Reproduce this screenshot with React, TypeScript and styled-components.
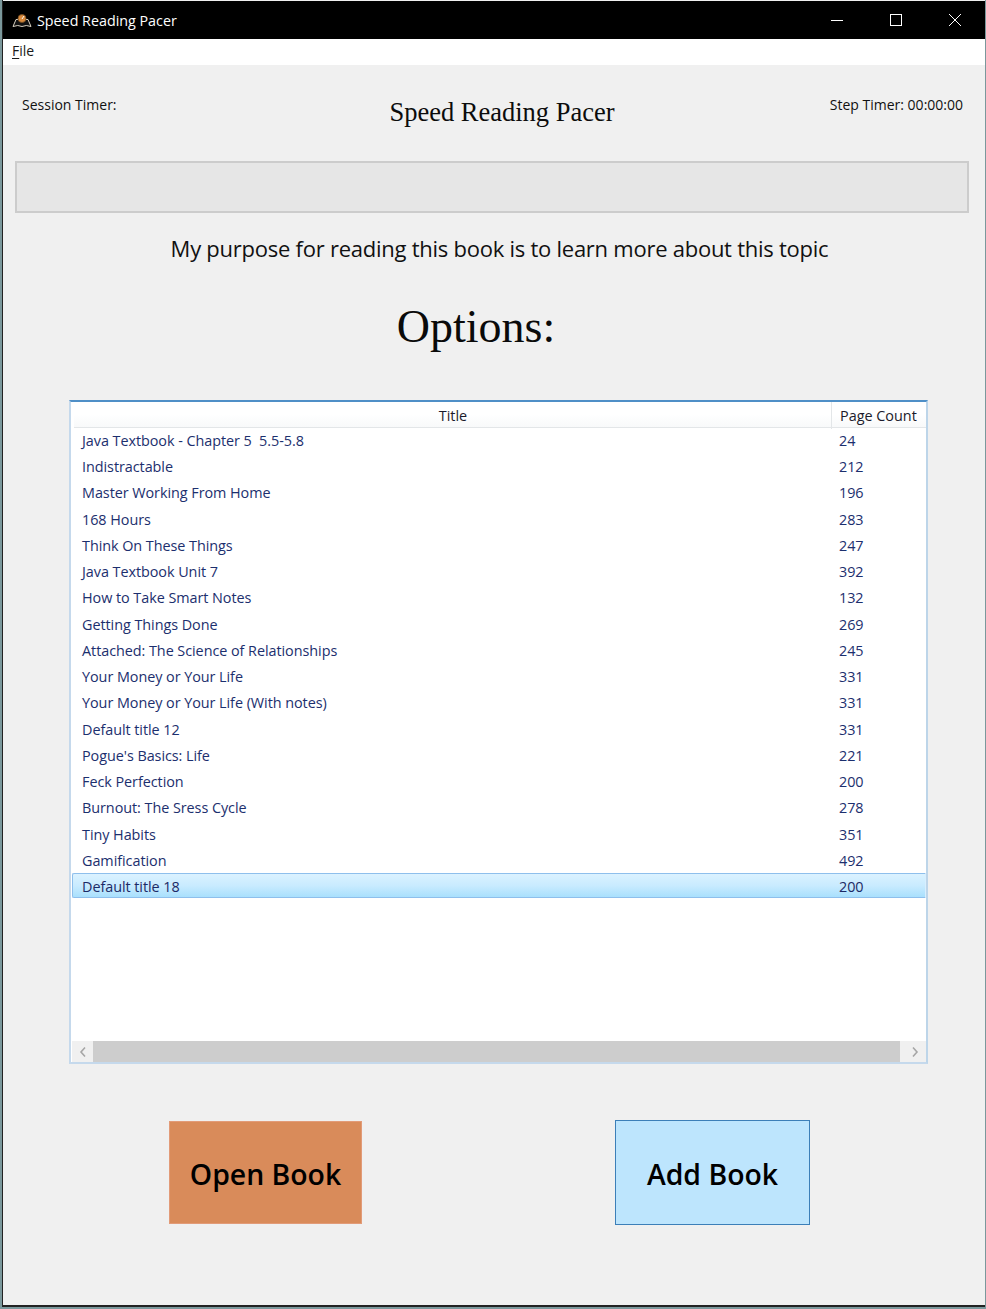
import React from "react";
import styled, { createGlobalStyle } from "styled-components";

const Global = createGlobalStyle`
  html, body { margin: 0; padding: 0; background: #7b989c; }
  body { width: 986px; height: 1309px; overflow: hidden; font-family: "Open Sans", "Noto Sans", sans-serif; }
`;

const Win = styled.div`
  box-sizing: border-box;
  width: 983px;
  height: 1307px;
  margin-left: 2px;
  padding-top: 1px;
  display: flex;
  flex-direction: column;
  background: #f0f0f0;
  border-left: 1px solid #222;
  border-bottom: 2px solid #222;
`;

const TitleBar = styled.div`
  height: 38px;
  flex: none;
  background: #000;
  color: #fff;
  display: flex;
  align-items: center;
  padding: 0 1px 0 9px;
  font-size: 14.3px;
`;

const AppName = styled.span`
  margin-left: 5px;
  flex: 1;
`;

const WinBtn = styled.div`
  width: 59px;
  height: 38px;
  display: flex;
  align-items: center;
  justify-content: center;
`;

const MenuBar = styled.div`
  height: 26px;
  flex: none;
  background: #fff;
  padding-left: 9px;
  font-size: 14px;
  line-height: 23px;
  color: #1a1a1a;
`;

const MenuKey = styled.span`
  text-decoration: underline;
  text-underline-offset: 2px;
`;

const Content = styled.div`
  flex: 1;
  display: flex;
  flex-direction: column;
`;

const Header = styled.div`
  height: 96px;
  flex: none;
  box-sizing: border-box;
  padding: 28px 22px 0 19px;
  display: grid;
  grid-template-columns: 1fr auto 1fr;
  align-items: start;
`;

const Timer = styled.div<{ $right?: boolean }>`
  font-size: 14px;
  line-height: 24px;
  color: #111;
  text-align: ${(p) => (p.$right ? "right" : "left")};
`;

const AppTitle = styled.div`
  font-family: "Liberation Serif", serif;
  font-size: 26.5px;
  line-height: 38px;
  color: #0c0c0c;
  padding-left: 19px;
`;

const Progress = styled.div`
  box-sizing: border-box;
  height: 52px;
  flex: none;
  margin: 0 16px 0 12px;
  background: #e6e6e6;
  border: 2px solid #cccccc;
`;

const Purpose = styled.div`
  margin-top: 19px;
  height: 32px;
  flex: none;
  text-align: center;
  padding-left: 11px;
  font-size: 22px;
  line-height: 32px;
  letter-spacing: -0.25px;
  color: #111;
`;

const Options = styled.div`
  margin-top: 28px;
  height: 70px;
  flex: none;
  text-align: center;
  padding-right: 36px;
  font-family: "Liberation Serif", serif;
  font-size: 46px;
  line-height: 70px;
  color: #0a0a0a;
`;

const Table = styled.div`
  box-sizing: border-box;
  flex: none;
  width: 859px;
  height: 664px;
  margin: 38px 0 0 66px;
  display: flex;
  flex-direction: column;
  background: #fff;
  border: 2px solid #c5d9ec;
  border-top-color: #4f8fc7;
  border-right-color: #bdd5e9;
`;

const HeadRow = styled.div`
  flex: none;
  height: 26px;
  margin-left: 3px;
  display: grid;
  grid-template-columns: 757px 95px;
  background: linear-gradient(#fff 50%, #f8f9fa);
  border-bottom: 1px solid #e3e6e8;
  box-sizing: border-box;
`;

const HeadCell = styled.div<{ $left?: boolean }>`
  font-size: 14.4px;
  line-height: 27px;
  color: #1b1b2b;
  text-align: ${(p) => (p.$left ? "left" : "center")};
  padding-left: ${(p) => (p.$left ? "8px" : "1px")};
  border-left: ${(p) => (p.$left ? "1px solid #e3e6e8" : "none")};
`;

const Rows = styled.div`
  flex: 1;
  min-height: 0;
  margin-top: -1px;
`;

const Row = styled.div<{ $sel?: boolean }>`
  box-sizing: border-box;
  height: 26.235px;
  display: grid;
  grid-template-columns: 757px 1fr;
  padding-left: 10px;
  margin-left: 1px;
  white-space: pre;
  font-size: 14.4px;
  line-height: 27px;
  letter-spacing: -0.05px;
  color: #1c2f6e;
  ${(p) =>
    p.$sel
      ? `
    height: 25px;
    line-height: 25px;
    border: 1px solid #8ebfec;
    border-right-color: #d8efff;
    border-radius: 2px 0 0 2px;
    padding-left: 9px;
    background: linear-gradient(#dbf2ff, #c9ebff 50%, #a9e0fd);
    color: #1c2a66;
  `
      : ""}
`;

const Scroll = styled.div`
  flex: none;
  height: 21px;
  display: flex;
  background: #f0f0f0;
  margin-left: 1px;
`;

const Arrow = styled.div<{ $w: number; $pad?: number }>`
  box-sizing: border-box;
  width: ${(p) => p.$w}px;
  padding-left: ${(p) => p.$pad ?? 0}px;
  display: flex;
  align-items: center;
  justify-content: center;
`;

const Thumb = styled.div`
  flex: 1;
  background: #cdcdcd;
`;

const Actions = styled.div`
  flex: none;
  display: flex;
  margin: 56px 0 0 166px;
  align-items: center;
`;

const Big = styled.button<{ $bg: string; $bd: string; $w: number; $h: number; $gap?: number }>`
  box-sizing: border-box;
  width: ${(p) => p.$w}px;
  height: ${(p) => p.$h}px;
  margin-left: ${(p) => p.$gap ?? 0}px;
  background: ${(p) => p.$bg};
  border: 1px solid ${(p) => p.$bd};
  padding: 3px 0 0;
  font-family: "Open Sans", sans-serif;
  font-size: 28.4px;
  font-weight: 600;
  color: #000;
`;

const books: [string, number][] = [
  ["Java Textbook - Chapter 5  5.5-5.8", 24],
  ["Indistractable", 212],
  ["Master Working From Home", 196],
  ["168 Hours", 283],
  ["Think On These Things", 247],
  ["Java Textbook Unit 7", 392],
  ["How to Take Smart Notes", 132],
  ["Getting Things Done", 269],
  ["Attached: The Science of Relationships", 245],
  ["Your Money or Your Life", 331],
  ["Your Money or Your Life (With notes)", 331],
  ["Default title 12", 331],
  ["Pogue's Basics: Life", 221],
  ["Feck Perfection", 200],
  ["Burnout: The Sress Cycle", 278],
  ["Tiny Habits", 351],
  ["Gamification", 492],
  ["Default title 18", 200],
];

export default function App() {
  return (
    <>
      <Global />
      <Win>
        <TitleBar>
          <svg width="20" height="15" viewBox="0 0 20 15">
            <path d="M1 13.5 L4 6.5 Q7 5.5 10 8 Q13 5.5 16 6.5 L19 13.5 Q14 11.5 10 13.5 Q6 11.5 1 13.5Z" fill="#111" stroke="#d8d0c0" strokeWidth="1" />
            <circle cx="10" cy="5.5" r="4" fill="#d98a3c" stroke="#6e4a22" strokeWidth="0.8" />
            <path d="M10 6 L12 3" stroke="#fff" strokeWidth="1" />
          </svg>
          <AppName>Speed Reading Pacer</AppName>
          <WinBtn>
            <svg width="12" height="12" viewBox="0 0 12 12">
              <path d="M0 6.5H12" stroke="#fff" strokeWidth="1" />
            </svg>
          </WinBtn>
          <WinBtn>
            <svg width="12" height="12" viewBox="0 0 12 12">
              <rect x="0.5" y="0.5" width="11" height="11" fill="none" stroke="#fff" strokeWidth="1" />
            </svg>
          </WinBtn>
          <WinBtn>
            <svg width="12" height="12" viewBox="0 0 12 12">
              <path d="M0 0L12 12M12 0L0 12" stroke="#fff" strokeWidth="1" />
            </svg>
          </WinBtn>
        </TitleBar>
        <MenuBar>
          <MenuKey>F</MenuKey>ile
        </MenuBar>
        <Content>
          <Header>
            <Timer>Session Timer:</Timer>
            <AppTitle>Speed Reading Pacer</AppTitle>
            <Timer $right>Step Timer: 00:00:00</Timer>
          </Header>
          <Progress />
          <Purpose>My purpose for reading this book is to learn more about this topic</Purpose>
          <Options>Options:</Options>
          <Table>
            <HeadRow>
              <HeadCell>Title</HeadCell>
              <HeadCell $left>Page Count</HeadCell>
            </HeadRow>
            <Rows>
              {books.map(([t, n], i) => (
                <Row key={i} $sel={i === books.length - 1}>
                  <span>{t}</span>
                  <span>{n}</span>
                </Row>
              ))}
            </Rows>
            <Scroll>
              <Arrow $w={21}>
                <svg width="8" height="12" viewBox="0 0 8 12">
                  <path d="M6 1.5L2 6L6 10.5" fill="none" stroke="#a6a6a6" strokeWidth="1.6" />
                </svg>
              </Arrow>
              <Thumb />
              <Arrow $w={26} $pad={4}>
                <svg width="8" height="12" viewBox="0 0 8 12">
                  <path d="M2 1.5L6 6L2 10.5" fill="none" stroke="#a6a6a6" strokeWidth="1.6" />
                </svg>
              </Arrow>
            </Scroll>
          </Table>
          <Actions>
            <Big $bg="#d98b5a" $bd="#e29b78" $w={193} $h={103}>Open Book</Big>
            <Big $bg="#bde5fd" $bd="#3c7fb8" $w={195} $h={105} $gap={253}>Add Book</Big>
          </Actions>
        </Content>
      </Win>
    </>
  );
}
